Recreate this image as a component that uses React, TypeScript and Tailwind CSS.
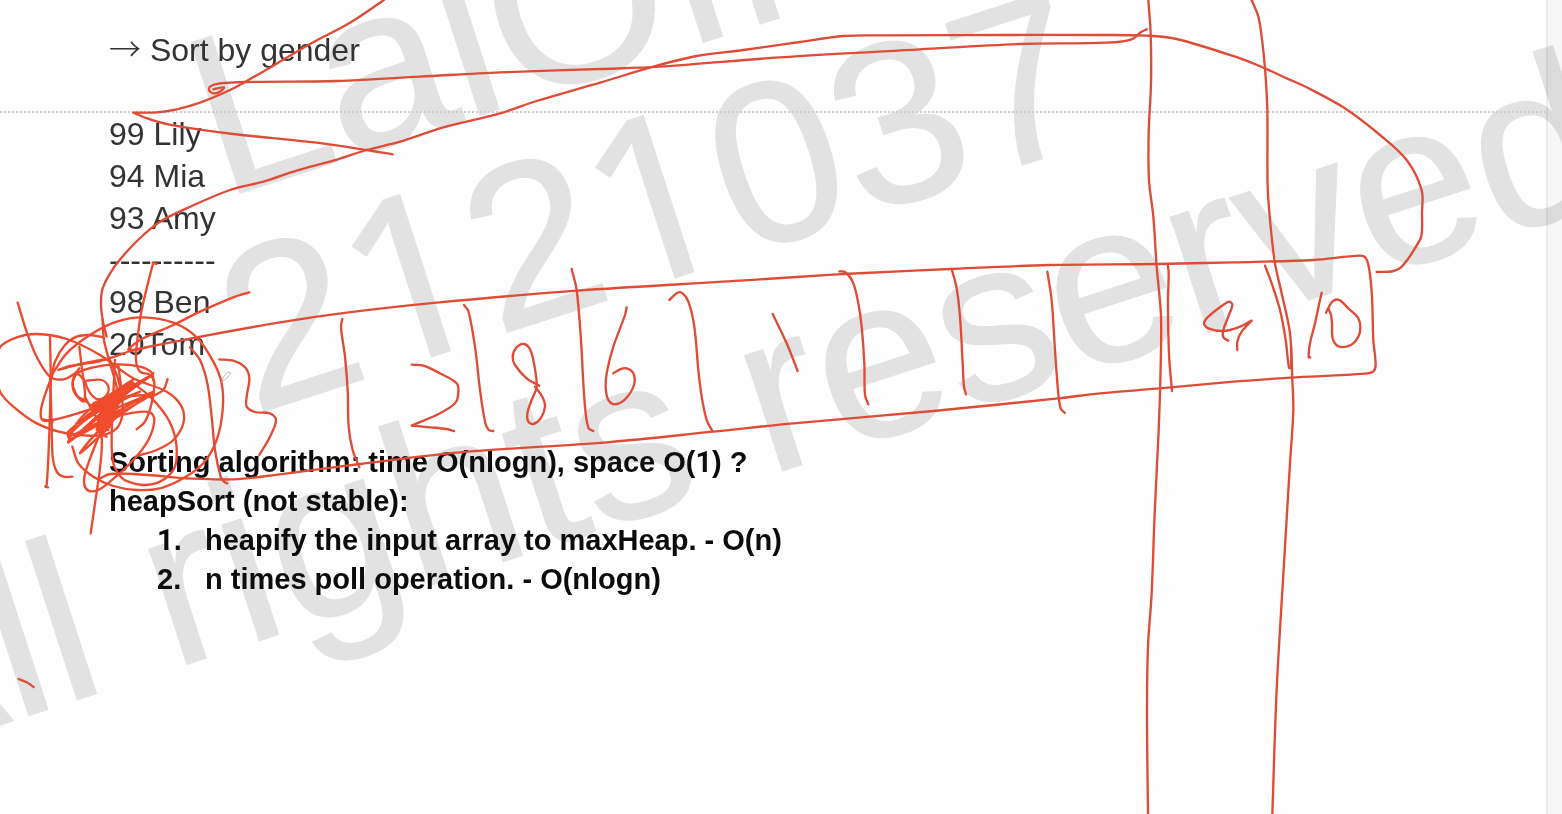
type Layer = { x: number; y: number; color?: string; strokes: string[] };

// Pen strokes, stored per area of the board in thirds of a pixel.
// Each stroke is a list of points; a repeated point makes a sharp corner.
const LAYERS: Layer[] = [
  {
    x: 0,
    y: 0,
    strokes: [
      "1152,0 1050,68 930,132 820,197 740,243 690,270 600,308 530,328 470,337 400,338 400,338 450,358 520,376 700,402 950,428 1100,450 1178,463",
      "640,268 672,262 658,276 640,280 628,272 630,260 655,251 740,246 1010,243 1260,230 1500,217 1800,207 1980,200 2340,172 2760,148 3060,132 3320,128 3395,118 3422,97 3440,88",
      "320,1010 308,960 303,910 308,865 340,805 385,750 430,705 480,665 560,625 690,570 790,545 890,512 1000,482 1100,450 1200,425 1330,382 1500,340 1610,303 1800,248 1960,200 2090,168 2230,150 2400,126 2530,108 2640,106 3000,105 3300,105 3440,107 3530,117 3720,175 3795,205 3860,235 3920,262 4030,322 4140,405 4220,480 4265,570 4266,640 4266,690 4262,715 4210,795 4180,813 4130,816",
      "3445,0 3452,100 3453,250 3446,400 3447,540 3460,650 3470,800 3483,950 3481,1140 3476,1290 3464,1540 3455,1780 3444,1940 3441,2140 3444,2442",
      "3755,0 3775,50 3785,110 3795,205 3802,330 3803,560 3812,680 3825,790 3845,880 3870,1000 3877,1140 3880,1230 3870,1390 3852,1690 3830,2070 3817,2442",
      "400,1050 590,1012 840,967 1040,938 1310,908 1730,872 2220,842 2530,822 2850,807 3150,795 3470,792 3700,787 3940,780 4080,767 4098,775 4108,810 4116,890 4120,1020 4127,1095 4120,1114 4095,1121 3870,1133 3700,1145 3470,1166 3300,1180 3175,1195 2800,1233 2380,1270 2140,1295 1820,1327 1380,1357 1080,1392 840,1423 700,1438 560,1435",
    ],
  },
  {
    x: 0,
    y: 750,
    color: "#ea4a2f",
    strokes: [
      "560,685 400,672 330,672 300,685",
      "175,360 210,348 300,333 400,300",
      "53,158 80,245 110,320 150,380 190,388 225,370 238,355",
      "460,38 450,75 425,180 412,270 408,330 420,365 450,375 463,400 455,460 435,515 410,538",
      "458,38 470,42",
      "748,127 700,142 600,185 520,225 430,265 385,298 395,302 440,292",
      "-15,350 0,292 50,262 110,252 200,267 300,315 400,385 500,425 545,470 550,520 520,570 470,600 410,618",
      "-15,350 0,425 40,470 110,520 200,550 300,556 350,535 368,490 365,440 352,380 325,320",
      "150,258 152,400 146,600 140,705 136,710 144,712",
      "150,380 155,520 158,620 170,665 190,680 217,680",
      "155,385 165,335 195,285 230,260 270,255 310,262",
      "155,375 200,310 270,255 350,215 430,202 520,218 590,262 640,335 665,400 668,480 650,570 610,640 550,685 480,715 410,720 340,708 280,680 235,640 217,590",
      "155,380 130,450 122,490 130,512 180,505 280,475 380,440 455,435",
      "180,358 250,340 330,325",
      "130,508 158,516",
      "238,290 245,350 255,430 250,455 230,435 218,400 230,370 280,352 350,343 420,350 455,368 460,390",
      "260,392 305,390 325,410 320,435 295,448 275,435 260,410 255,395 232,372 218,400 228,435 260,455",
      "255,440 265,460 300,520 325,540",
      "345,330 335,560 340,640 362,680 385,695 430,705 480,695 520,660 530,620 525,560 500,500 450,440 400,400",
      "205,575 270,530 330,505 400,488 450,487 463,510 445,570 400,630 330,695 290,722 262,720 252,690 265,640 300,550",
      "305,540 305,600 298,670 285,760 272,850",
      "308,210 312,270 330,340 350,410 350,430",
      "355,345 362,400 370,440",
      "455,440 490,420 503,387",
    ],
  },
  {
    x: 0,
    y: 750,
    color: "#f04b2d",
    strokes: [
      "205,575 230,520 280,470 400,390 205,545 215,570 400,400 240,520 410,405 280,480 455,375 300,490 460,430 210,570 460,425 300,540 240,610 330,530",
      "270,465 330,470 290,500 350,460 300,515 360,480 310,530 350,500 300,550 320,560",
      "275,475 345,430 285,490 370,430 295,505 365,450 300,520 355,470 295,545 340,510 300,560",
      "280,460 330,440 280,475 380,425 310,475 420,425 330,460 400,410 340,440 385,400 300,460",
      "210,550 250,515 290,480 400,410 450,378 460,370 380,430 330,475 290,540 330,490 310,550",
      "300,470 320,500 330,450 340,490 350,430 325,530 305,500 290,530",
      "205,560 240,545 290,500 205,578",
    ],
  },
  {
    x: 0,
    y: 750,
    strokes: [
      "570,292 600,330 622,400 635,500 645,600 662,680 672,695 682,700",
      "658,328 700,332 735,352 748,385 740,440 740,470 765,486 810,490 828,510 810,560 778,615",
    ],
  },
  {
    x: 840,
    y: 720,
    strokes: [
      "187,237 183,262 195,350 203,450 206,560 218,630 238,682",
      "395,374 430,377 480,400 530,430 535,460 525,490 480,520 395,557 395,557 450,562 500,567 522,573",
      "552,195 565,213 585,320 600,450 615,545 626,570 640,573",
      "778,437 740,415 705,375 698,350 710,322 732,312 750,328 762,370 770,440 755,480 742,520 745,545 760,552 782,535 795,500 787,470 765,440",
      "875,87 890,150 903,300 910,430 917,520 926,565 940,573",
      "1040,202 1035,225 1000,320 982,390 977,440 985,480 1003,493 1035,478 1062,435 1060,400 1040,385 1020,388 1000,400",
      "1168,180 1190,160 1205,158 1225,185 1243,260 1255,390 1265,470 1280,540 1297,573",
    ],
  },
  {
    x: 2100,
    y: 660,
    strokes: [
      "218,282 260,370 293,453",
      "418,154 435,156 458,185 475,250 485,320 493,430 495,525 505,553",
      "755,147 770,205 780,290 788,430 792,500 798,523",
      "1042,155 1055,240 1065,390 1074,510 1082,565 1095,579",
    ],
  },
  {
    x: 3300,
    y: 600,
    strokes: [
      "203,192 206,220 204,300 205,400 208,480 216,573",
      "495,197 515,250 540,330 557,420 567,503 573,503 573,440",
      "385,422 370,412 370,390 385,350 397,315 388,305 365,318 325,350 312,370 325,385 370,393 415,382 455,362 455,362 425,395 412,425 412,450",
      "665,278 660,300 645,370 630,430 626,472 631,472",
      "678,338 690,315 700,302 718,300 745,325 775,355 780,395 765,425 740,440 712,437 698,415 696,370 693,345 685,325",
    ],
  },
  { x: 0, y: 1500, strokes: ["56,537 80,547 101,561"] },
];

// Smooth curve through the points; handles shrink with their own segment so
// that short hooks beside long runs keep their shape.
function toPath(stroke: string): string {
  const pts = stroke.split(" ").map((p) => p.split(",").map(Number));
  const dist = (p: number[], q: number[]) => Math.hypot(q[0] - p[0], q[1] - p[1]);
  let d = `M${pts[0][0]} ${pts[0][1]}`;
  for (let i = 0; i < pts.length - 1; i++) {
    const a = pts[i - 1] ?? pts[i];
    const b = pts[i];
    const c = pts[i + 1];
    const e = pts[i + 2] ?? c;
    const len = dist(b, c);
    const k1 = len / (3 * (dist(a, b) + len || 1));
    const k2 = len / (3 * (dist(c, e) + len || 1));
    d += `C${b[0] + (c[0] - a[0]) * k1} ${b[1] + (c[1] - a[1]) * k1} ${c[0] - (e[0] - b[0]) * k2} ${c[1] - (e[1] - b[1]) * k2} ${c[0]} ${c[1]}`;
  }
  return d;
}

function Watermark() {
  return (
    <svg
      className="pointer-events-none absolute top-0 left-0 h-[814px] w-[1562px] fill-[#e2e2e2] stroke-[#e2e2e2] stroke-1 font-['Liberation_Sans',sans-serif] text-[230px]"
      viewBox="0 0 1562 814"
    >
      <text transform="translate(222 199) rotate(-18)">LaiOffer</text>
      <g transform="translate(253 415) rotate(-18)">
        <text>2</text>
        <text x="126" className="font-['Noto_Sans',sans-serif]">1</text>
        <text x="256">2</text>
        <text x="382" className="font-['Noto_Sans',sans-serif]">1</text>
        <text x="512">037</text>
      </g>
      <text transform="translate(-132 768) rotate(-18)">All rights reserved</text>
    </svg>
  );
}

function Ink() {
  return (
    <svg
      className="pointer-events-none absolute top-0 left-0 h-[814px] w-[1562px]"
      viewBox="0 0 4686 2442"
      fill="none"
      stroke="#de4c37"
      strokeWidth="7"
      strokeLinecap="round"
      strokeLinejoin="round"
      aria-hidden="true"
    >
      {LAYERS.map((layer, i) => (
        <g key={i} transform={`translate(${layer.x} ${layer.y})`} stroke={layer.color}>
          {layer.strokes.map((s, j) => (
            <path key={j} d={toPath(s)} />
          ))}
        </g>
      ))}
      <g stroke="#b5b5b5" strokeWidth="3">
        <path d="M666 1144L670 1131L686 1115L693 1121L678 1136Z" />
      </g>
    </svg>
  );
}

function One() {
  return <span className="font-['Roboto',sans-serif] leading-none">1</span>;
}

export default function App() {
  return (
    <div className="relative flex min-h-screen overflow-hidden bg-[#fefefe] font-['Liberation_Sans',Arial,sans-serif]">
      <Watermark />
      <main className="relative min-w-0 flex-1">
        <p className="pt-[29px] pl-[109px] text-[32px] leading-[42px] text-[#333]">
          <span className="font-['Noto_Sans_CJK_SC',sans-serif] leading-none font-light">→</span> Sort by gender
        </p>
        <hr className="mt-10 border-t-2 border-dotted border-[#cdcdcd]" />
        <div className="pl-[109px] text-[32px] leading-[42px] text-[#333]">
          <p>99 Lily</p>
          <p>94 Mia</p>
          <p>93 Amy</p>
          <p>----------</p>
          <p>98 Ben</p>
          <p>20Tom</p>
        </div>
        <div className="mt-[78px] pl-[109px] text-[29px] leading-[39px] font-bold text-[#0c0c0c]">
          <p>
            Sorting algorithm: time O(nlogn), space O(<One />) ?
          </p>
          <p>heapSort (not stable):</p>
          <ol className="pl-12">
            <li className="flex items-baseline">
              <span className="w-12"><One />.</span>
              <span>heapify the input array to maxHeap. - O(n)</span>
            </li>
            <li className="flex items-baseline">
              <span className="w-12">2.</span>
              <span>n times poll operation. - O(nlogn)</span>
            </li>
          </ol>
        </div>
      </main>
      <aside className="w-4 border-l-2 border-[#ececec] bg-[#f8f8f8] mix-blend-multiply" />
      <Ink />
    </div>
  );
}
